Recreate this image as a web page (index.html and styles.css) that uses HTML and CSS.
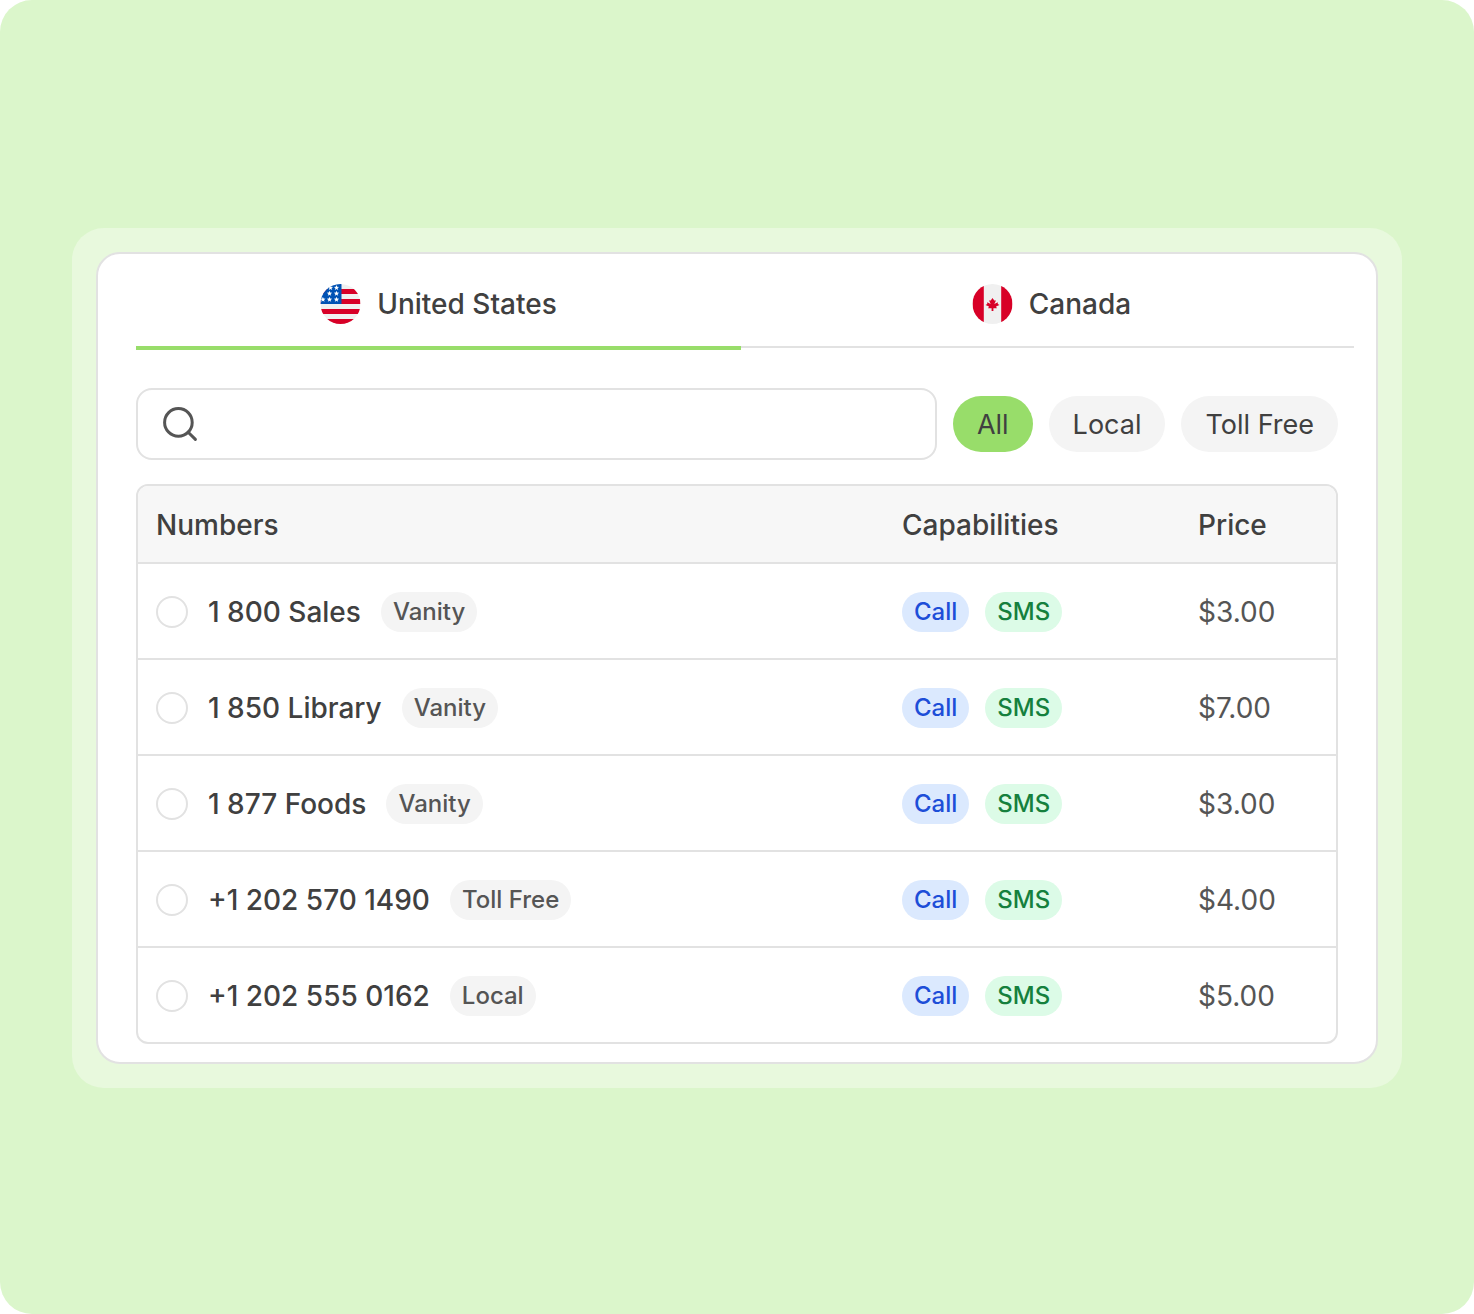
FILE: index.html
```html
<!DOCTYPE html>
<html lang="en">
<head>
    <meta charset="UTF-8">
    <meta name="viewport" content="width=device-width, initial-scale=1.0">
    <title>Choose a number</title>
    <link rel="stylesheet" href="styles.css">
</head>
<body>

    <main class="stage">
        <div class="frame">
            <div class="card">

                <div class="tabs" role="tablist">
                    <button class="tab active" type="button" role="tab" aria-selected="true">
                        <svg class="flag" viewBox="0 0 40 40" aria-hidden="true">
                            <defs>
                                <clipPath id="round"><circle cx="20" cy="20" r="20"/></clipPath>
                                <path id="star" d="M0-2.8 .7-.9 2.7-.8 1.1 .4 1.7 2.3 0 1.2-1.7 2.3-1.1 .4-2.7-.8-.7-.9z" fill="#fff"/>
                            </defs>
                            <g clip-path="url(#round)">
                                <path d="M0 0h40v40H0z" fill="#f0f0f0"/>
                                <path d="M0 5h40v5H0zM0 15h40v5H0zM0 25h40v5H0zM0 35h40v5H0z" fill="#d80027"/>
                                <path d="M0 0h21v20H0z" fill="#0052b4"/>
                                <use href="#star" x="10" y="3.7"/>
                                <use href="#star" x="16" y="3.7"/>
                                <use href="#star" x="9" y="9.5"/>
                                <use href="#star" x="16" y="9.5"/>
                                <use href="#star" x="2.4" y="15.5"/>
                                <use href="#star" x="9" y="15.5"/>
                                <use href="#star" x="16" y="15.5"/>
                            </g>
                        </svg>
                        United States
                    </button>
                    <button class="tab" type="button" role="tab" aria-selected="false">
                        <svg class="flag" viewBox="0 0 40 40" aria-hidden="true">
                            <g clip-path="url(#round)">
                                <path d="M0 0h40v40H0z" fill="#f0f0f0"/>
                                <path d="M0 0h11.3v40H0zM28.7 0H40v40H28.7z" fill="#d80027"/>
                                <path d="M23.5 22.6l3.5-1.7-1.7-.9v-1.7l-3.5 1.7 1.7-3.5h-1.7L20 13.9l-1.8 2.6h-1.7l1.7 3.5-3.5-1.7V20l-1.7.9 3.5 1.7-.9 1.7h3.5V27h1.8v-2.7h3.5z" fill="#d80027"/>
                            </g>
                        </svg>
                        Canada
                    </button>
                </div>

                <div class="toolbar">
                    <div class="search">
                        <svg class="search-icon" viewBox="0 0 40 40" aria-hidden="true">
                            <circle cx="18.4" cy="18.4" r="13.8" fill="none" stroke="#555" stroke-width="3"/>
                            <path d="M28.2 28.2l7.2 7.2" stroke="#555" stroke-width="3" stroke-linecap="round"/>
                        </svg>
                        <input type="text" aria-label="Search numbers">
                    </div>
                    <button class="filter active" type="button">All</button>
                    <button class="filter" type="button">Local</button>
                    <button class="filter" type="button">Toll Free</button>
                </div>

                <table class="numbers">
                    <thead>
                        <tr>
                            <th>Numbers</th>
                            <th class="col-cap">Capabilities</th>
                            <th class="col-price">Price</th>
                        </tr>
                    </thead>
                    <tbody>
                        <tr>
                            <td>
                                <div class="row">
                                    <input type="radio" name="number" id="n1">
                                    <label for="n1">1 800 Sales</label>
                                    <span class="badge">Vanity</span>
                                </div>
                            </td>
                            <td><div class="caps"><span class="badge call">Call</span><span class="badge sms">SMS</span></div></td>
                            <td class="price">$3.00</td>
                        </tr>
                        <tr>
                            <td>
                                <div class="row">
                                    <input type="radio" name="number" id="n2">
                                    <label for="n2">1 850 Library</label>
                                    <span class="badge">Vanity</span>
                                </div>
                            </td>
                            <td><div class="caps"><span class="badge call">Call</span><span class="badge sms">SMS</span></div></td>
                            <td class="price">$7.00</td>
                        </tr>
                        <tr>
                            <td>
                                <div class="row">
                                    <input type="radio" name="number" id="n3">
                                    <label for="n3">1 877 Foods</label>
                                    <span class="badge">Vanity</span>
                                </div>
                            </td>
                            <td><div class="caps"><span class="badge call">Call</span><span class="badge sms">SMS</span></div></td>
                            <td class="price">$3.00</td>
                        </tr>
                        <tr>
                            <td>
                                <div class="row">
                                    <input type="radio" name="number" id="n4">
                                    <label for="n4">+1 202 570 1490</label>
                                    <span class="badge">Toll Free</span>
                                </div>
                            </td>
                            <td><div class="caps"><span class="badge call">Call</span><span class="badge sms">SMS</span></div></td>
                            <td class="price">$4.00</td>
                        </tr>
                        <tr>
                            <td>
                                <div class="row">
                                    <input type="radio" name="number" id="n5">
                                    <label for="n5">+1 202 555 0162</label>
                                    <span class="badge">Local</span>
                                </div>
                            </td>
                            <td><div class="caps"><span class="badge call">Call</span><span class="badge sms">SMS</span></div></td>
                            <td class="price">$5.00</td>
                        </tr>
                    </tbody>
                </table>

            </div>
        </div>
    </main>

</body>
</html>
```
FILE: styles.css
```css
* {
    margin: 0;
    padding: 0;
    box-sizing: border-box;
}

body {
    background: #fff;
    color: #404040;
    font-family: Inter, "Liberation Sans", sans-serif;
    font-size: 28px;
    font-weight: 500;
    line-height: 36px;
}

button, input {
    font: inherit;
    color: inherit;
    border: none;
    background: none;
}

button {
    cursor: pointer;
}

.stage {
    min-height: 100vh;
    padding: 228px 72px 226px;
    background: #dbf6cb;
    border-radius: 32px;
}

.frame {
    padding: 24px;
    background: #e8f9dd;
    border-radius: 32px;
}

.card {
    padding: 0 38px 18px;
    background: #fff;
    border: 2px solid #e2e2e2;
    border-radius: 24px;
}

/* tabs */
.tabs {
    display: grid;
    grid-template-columns: 1fr 1fr;
    gap: 8px;
    margin-right: -16px;
    border-bottom: 2px solid #e2e2e2;
}

.tab {
    display: flex;
    align-items: center;
    justify-content: center;
    gap: 16px;
    padding: 30px 0 22px;
    margin-bottom: -4px;
    border-bottom: 4px solid transparent;
}

.tab.active {
    border-color: #98dd6a;
}

.flag {
    width: 41px;
    height: 40px;
}

/* search and filters */
.toolbar {
    display: flex;
    align-items: center;
    gap: 16px;
    margin: 40px 0 24px;
}

.search {
    flex: 1;
    display: flex;
    align-items: center;
    gap: 12px;
    height: 72px;
    padding: 0 22px;
    border: 2px solid #e2e2e2;
    border-radius: 16px;
}

.search-icon {
    width: 40px;
    height: 40px;
}

.search input {
    flex: 1;
    min-width: 0;
    outline: none;
}

.filter {
    height: 56px;
    padding: 2px 24px 0;
    border-radius: 28px;
    background: #f4f4f4;
    font-size: 27px;
    font-weight: 400;
}

.filter.active {
    background: #98dd6a;
}

/* table */
.numbers {
    width: 100%;
    border: 2px solid #e2e2e2;
    border-radius: 12px;
    border-spacing: 0;
    overflow: hidden;
}

.numbers th {
    height: 76px;
    padding: 2px 18px 0;
    background: #f7f7f7;
    font-weight: 500;
    text-align: left;
}

.numbers td {
    height: 96px;
    padding: 2px 18px 0;
    border-top: 2px solid #e2e2e2;
}

.col-cap {
    width: 296px;
}

.col-price {
    width: 156px;
}

.row {
    display: flex;
    align-items: center;
    gap: 20px;
}

.row input {
    appearance: none;
    width: 32px;
    height: 32px;
    border: 2px solid #e2e2e2;
    border-radius: 50%;
}

.row input:checked {
    border: 10px solid #98dd6a;
}

.caps {
    display: flex;
    gap: 16px;
}

.badge {
    padding: 0 12px;
    border-radius: 20px;
    background: #f4f4f4;
    color: #555;
    font-size: 24px;
    line-height: 40px;
}

.badge.call {
    background: #dbe9fe;
    color: #1d4ed8;
}

.badge.sms {
    background: #dcfbe7;
    color: #15803d;
}

.numbers .price {
    color: #555;
    font-weight: 400;
}
```
